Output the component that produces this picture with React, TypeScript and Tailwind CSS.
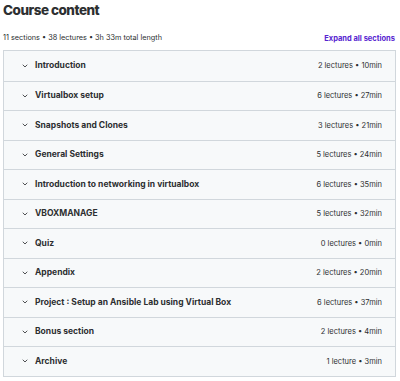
import { ChevronDown } from "lucide-react";

const sections = [
  { title: "Introduction", meta: "2 lectures • 10min" },
  { title: "Virtualbox setup", meta: "6 lectures • 27min" },
  { title: "Snapshots and Clones", meta: "3 lectures • 21min" },
  { title: "General Settings", meta: "5 lectures • 24min" },
  { title: "Introduction to networking in virtualbox", meta: "6 lectures • 35min" },
  { title: "VBOXMANAGE", meta: "5 lectures • 32min" },
  { title: "Quiz", meta: "0 lectures • 0min" },
  { title: "Appendix", meta: "2 lectures • 20min" },
  { title: "Project : Setup an Ansible Lab using Virtual Box", meta: "6 lectures • 37min" },
  { title: "Bonus section", meta: "2 lectures • 4min" },
  { title: "Archive", meta: "1 lecture • 3min" },
];

export default function App() {
  return (
    <div className="w-[400px] h-[381px] bg-white px-[3px] pt-[1px] text-[#2d2f31] font-['Inter',sans-serif] overflow-hidden">
      <h2 className="text-[13.5px] font-extrabold leading-[19px] tracking-[-0.5px]">Course content</h2>
      <div className="flex items-end justify-between mt-[10px] mr-[2px] h-[14px]">
        <span className="text-[7.3px] text-[#2d2f31]">11 sections • 38 lectures • 3h 33m total length</span>
        <span className="text-[7.5px] font-bold text-[#5624d0]">Expand all sections</span>
      </div>
      <div className="mt-[6px] w-[393px] border border-[#d1d7dc]">
        {sections.map((s, i) => (
          <div
            key={i}
            className={`flex items-center h-[29.5px] bg-[#f7f9fa] pl-[17px] pr-[13px] ${i > 0 ? "border-t border-[#d1d7dc]" : ""}`}
          >
            <ChevronDown className="w-[8px] h-[8px] text-[#2d2f31]" strokeWidth={2.5} />
            <span className="ml-[6px] text-[8.5px] font-bold">{s.title}</span>
            <span className="ml-auto text-[7.5px] text-[#2d2f31]">{s.meta}</span>
          </div>
        ))}
      </div>
    </div>
  );
}
